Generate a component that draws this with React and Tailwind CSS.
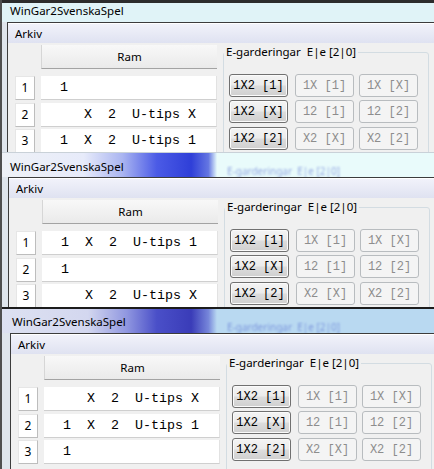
import React from "react";

const SANS = "font-['Noto_Sans',sans-serif]";
const MONO = "font-['Liberation_Mono',monospace]";

const FULL = "1  X  2  U-tips 1";
const HALF = "   X  2  U-tips X";
const ONE = "1";

function Btn({ label, on, className = "" }) {
  if (on) {
    return (
      <div
        className={`w-[59px] h-[23px] shrink-0 flex items-center justify-center rounded-[3px] border border-[#707070] bg-[linear-gradient(#f4f4f4_0%,#ebebeb_48%,#dddddd_52%,#cfcfcf_100%)] shadow-[inset_0_0_0_1px_#fbfbfb] ${MONO} text-[12px] text-black whitespace-pre ${className}`}
      >
        {label}
      </div>
    );
  }
  return (
    <div
      className={`w-[59px] h-[23px] shrink-0 flex items-center justify-center rounded-[3px] border border-[#b8bcbf] bg-[#f4f4f4] ${MONO} text-[12px] text-[#8d8d8d] whitespace-pre ${className}`}
    >
      {label}
    </div>
  );
}

function Row({ n, text, className = "" }) {
  return (
    <div className={`flex gap-[6px] ${className}`}>
      <div className={`w-[20px] h-[24px] bg-white border border-[#e6e6e6] border-r-[#bdbdbd] border-b-[#bdbdbd] flex items-center justify-center ${SANS} text-[12px] text-black`}>
        {n}
      </div>
      <div className={`w-[176px] h-[24px] bg-white border-b border-[#cfcfcf] border-r border-r-[#e2e2e2] flex items-center pl-[19px] ${MONO} text-[13.333px] text-black whitespace-pre`}>
        {text}
      </div>
    </div>
  );
}

function Window({ wrap, titleBar, titleLeft, titleRight, titlePad, ghost, frame, rows }) {
  return (
    <div className={`shrink-0 overflow-hidden flex flex-col ${wrap}`}>
      {/* title bar */}
      <div className={`flex shrink-0 ${titleBar}`}>
        <div className={`w-[215px] shrink-0 flex items-center ${titleLeft} ${titlePad}`}>
          <span className={`${SANS} text-[11.5px] text-black`}>WinGar2SvenskaSpel</span>
        </div>
        <div className={`flex-1 flex items-end overflow-hidden pl-[10px] ${titleRight}`}>
          {ghost && (
            <span className={`${SANS} text-[10px] leading-[11px] whitespace-pre text-[#3f55c8] opacity-50 blur-[1.2px]`}>
              E-garderingar  E|e [2|0]
            </span>
          )}
        </div>
      </div>

      <div className="flex flex-1 min-h-0">
        <div className={`shrink-0 bg-[#dfe5ec] ${frame}`} />
        <div className="flex-1 min-w-0 flex flex-col border-l border-t border-[#3c3c3c] bg-[#f0f0f0]">
          {/* menu */}
          <div className={`h-[20px] shrink-0 flex items-center pl-[7px] border-t border-white bg-[linear-gradient(#f1f2fa,#dfe2f1)] ${SANS} text-[11.5px] text-black`}>
            Arkiv
          </div>

          <div className="flex">
            {/* grid */}
            <div className="flex flex-col pl-[7px] pt-[2px]">
              <div className="flex gap-[6px]">
                <div className="w-[20px]" />
                <div className={`w-[176px] h-[24px] flex items-center justify-center border-l border-[#d6d6d6] border-b border-b-[#a3a3a3] bg-[linear-gradient(#f8f8f8,#eaeaea)] ${SANS} text-[11.5px] text-black`}>
                  Ram
                </div>
              </div>
              <Row n="1" text={rows[0]} className="mt-[7px]" />
              <Row n="2" text={rows[1]} className="mt-[3px]" />
              <Row n="3" text={rows[2]} className="mt-[2px]" />
            </div>

            {/* E-garderingar group */}
            <fieldset className="ml-[6px] mt-[1px] w-[206px] h-[140px] shrink-0 border border-[#d3dce2] rounded-[3px]">
              <legend className={`ml-[0px] px-[2px] leading-[16px] whitespace-pre ${SANS} text-[11.5px] text-black`}>
                E-garderingar  E|e [2|0]
              </legend>
              <div className="flex flex-col pl-[5px] mt-[14px]">
                <div className="flex">
                  <Btn on label="1X2 [1]" />
                  <Btn label="1X [1]" className="ml-[7px]" />
                  <Btn label="1X [X]" className="ml-[5px]" />
                </div>
                <div className="flex mt-[3px]">
                  <Btn on label="1X2 [X]" />
                  <Btn label="12 [1]" className="ml-[7px]" />
                  <Btn label="12 [2]" className="ml-[5px]" />
                </div>
                <div className="flex mt-[4px]">
                  <Btn on label="1X2 [2]" />
                  <Btn label="X2 [X]" className="ml-[7px]" />
                  <Btn label="X2 [2]" className="ml-[5px]" />
                </div>
              </div>
            </fieldset>
          </div>
        </div>
      </div>
    </div>
  );
}

export default function App() {
  return (
    <div className="w-[434px] h-[469px] overflow-hidden flex bg-[#f0f0f0]">
      <div className="w-[2px] shrink-0 bg-[#4f4f4f]" />
      <div className="flex-1 min-w-0 flex flex-col">
        <Window
          wrap="h-[152px] border-t-[3px] border-t-[#2c2c2c]"
          titleBar="h-[19px]"
          titleLeft="bg-[#e0f3f7]"
          titleRight="bg-[#e0f3f7]"
          titlePad="pl-[8px] pb-[3px]"
          frame="w-[5px]"
          rows={[ONE, HALF, FULL]}
        />
        <Window
          wrap="h-[155px] border-t border-t-[#c9d1d8]"
          titleBar="h-[24px]"
          titleLeft="bg-[linear-gradient(to_right,#eef1f6_0%,#e7ebfa_38%,#aab5f1_56%,#4b5be6_72%,#2f3fd8_88%,#6476e2_96%,#e6fafb_100%)]"
          titleRight="bg-[#e9fbfb]"
          titlePad="pl-[8px] pt-[3px]"
          ghost
          frame="w-[6px]"
          rows={[FULL, ONE, HALF]}
        />
        <Window
          wrap="flex-1 border-t-2 border-t-[#1c1c1c]"
          titleBar="h-[24px]"
          titleLeft="bg-[linear-gradient(to_right,#dde1f1_0%,#d3d7ef_40%,#9097e0_58%,#4a4fc8_72%,#3a3cb8_88%,#7686da_96%,#b9d9f1_100%)]"
          titleRight="bg-[#b9d9f1]"
          titlePad="pl-[10px] pt-[2px]"
          ghost
          frame="w-[8px]"
          rows={[HALF, FULL, ONE]}
        />
      </div>
    </div>
  );
}
